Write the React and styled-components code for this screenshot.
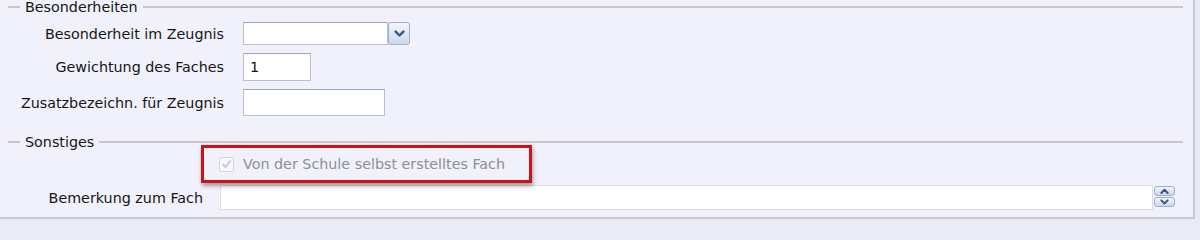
import React from "react";
import styled, { createGlobalStyle } from "styled-components";

const Global = createGlobalStyle`
  html, body {
    margin: 0;
    padding: 0;
    background: #ebebf5;
  }
  body {
    font-family: "DejaVu Sans", "Liberation Sans", sans-serif;
    font-size: 14.3px;
    color: #161616;
  }
`;

const Panel = styled.div`
  width: 1193px;
  height: 217px;
  background: #f1f1fc;
  border-right: 2px solid #c8c8d3;
  border-bottom: 2px solid #c8c8d3;
  display: flex;
  flex-direction: column;
`;

const GroupHeader = styled.div`
  display: flex;
  align-items: center;
  gap: 5px;
  height: 14px;
  padding: 0 10px 0 8px;
  margin-top: ${(p) => p.$top || 0}px;
  &::before,
  &::after {
    content: "";
    height: 2px;
    background: #c6c6cc;
  }
  &::before {
    width: 12px;
  }
  &::after {
    flex: 1;
  }
`;

const GroupTitle = styled.span`
  line-height: 14px;
  white-space: nowrap;
`;

const FormGrid = styled.div`
  display: grid;
  grid-template-columns: ${(p) => p.$label}px auto;
  column-gap: ${(p) => p.$gap}px;
  row-gap: 8px;
  padding-top: 8px;
  align-items: center;
`;

const Label = styled.div`
  text-align: right;
  white-space: nowrap;
`;

const FieldRow = styled.div`
  display: flex;
  align-items: stretch;
  height: ${(p) => p.$h}px;
`;

const TextField = styled.input`
  box-sizing: border-box;
  width: ${(p) => p.$w}px;
  height: 100%;
  margin: 0;
  padding: 0 6px;
  border: 1px solid #b9c0d0;
  border-top-color: #9aa4bc;
  background: #fff;
  font: inherit;
  color: #111;
  outline: none;
`;

const MiniButton = styled.div`
  box-sizing: border-box;
  width: ${(p) => p.$w}px;
  height: ${(p) => p.$h}px;
  border: 1px solid #9fb0cc;
  border-radius: 3px;
  background: linear-gradient(#f3f6fc, #cbd7ee);
  display: flex;
  align-items: center;
  justify-content: center;
`;

const Highlight = styled.div`
  box-sizing: border-box;
  width: 331px;
  height: 38px;
  margin: -4px 0 0 201px;
  border: 3px solid #cf1018;
  box-shadow: 1px 3px 4px rgba(0, 0, 0, 0.35);
  display: flex;
  align-items: center;
  gap: 9px;
  padding-left: 15px;
  position: relative;
  z-index: 1;
`;

const Check = styled.span`
  box-sizing: border-box;
  width: 15px;
  height: 15px;
  border: 1px solid #d3d3dc;
  border-radius: 2px;
  background: #f8f8fc;
  display: flex;
  align-items: center;
  justify-content: center;
`;

const CheckLabel = styled.span`
  color: #8e8e94;
  white-space: nowrap;
`;

const NoteRow = styled.div`
  display: flex;
  align-items: center;
  margin-top: 2px;
  height: 25px;
`;

const NoteLabel = styled(Label)`
  width: 203px;
  margin-right: 17px;
`;

const NoteField = styled.div`
  box-sizing: border-box;
  width: 933px;
  height: 100%;
  background: #fff;
  border: 1px solid #dcdce4;
`;

const Spinner = styled.div`
  display: flex;
  flex-direction: column;
  gap: 1px;
  margin-left: 1px;
  padding-top: 2px;
  height: 100%;
`;

const Chevron = ({ up, size = 10 }) => (
  <svg width={size} height={size * 0.7} viewBox="0 0 10 7">
    <polyline
      points={up ? "1.5,5.5 5,2 8.5,5.5" : "1.5,1.5 5,5 8.5,1.5"}
      fill="none"
      stroke="#3b5683"
      strokeWidth="2.2"
      strokeLinecap="round"
      strokeLinejoin="round"
    />
  </svg>
);

export default function App() {
  return (
    <>
      <Global />
      <Panel>
        <GroupHeader>
          <GroupTitle>Besonderheiten</GroupTitle>
        </GroupHeader>
        <FormGrid $label={224} $gap={19}>
          <Label>Besonderheit im Zeugnis</Label>
          <FieldRow $h={23}>
            <TextField readOnly $w={145} />
            <MiniButton $w={22} $h={23}>
              <Chevron size={11} />
            </MiniButton>
          </FieldRow>
          <Label>Gewichtung des Faches</Label>
          <FieldRow $h={28}>
            <TextField readOnly $w={68} defaultValue="1" />
          </FieldRow>
          <Label>Zusatzbezeichn. für Zeugnis</Label>
          <FieldRow $h={27}>
            <TextField readOnly $w={142} />
          </FieldRow>
        </FormGrid>
        <GroupHeader $top={19}>
          <GroupTitle>Sonstiges</GroupTitle>
        </GroupHeader>
        <Highlight>
          <Check>
            <svg width="11" height="10" viewBox="0 0 11 10">
              <polyline
                points="1.5,5 4.5,8 9.5,1.5"
                fill="none"
                stroke="#c8c8d2"
                strokeWidth="2"
              />
            </svg>
          </Check>
          <CheckLabel>Von der Schule selbst erstelltes Fach</CheckLabel>
        </Highlight>
        <NoteRow>
          <NoteLabel>Bemerkung zum Fach</NoteLabel>
          <NoteField />
          <Spinner>
            <MiniButton $w={21} $h={10}>
              <Chevron up size={9} />
            </MiniButton>
            <MiniButton $w={21} $h={10}>
              <Chevron size={9} />
            </MiniButton>
          </Spinner>
        </NoteRow>
      </Panel>
    </>
  );
}
